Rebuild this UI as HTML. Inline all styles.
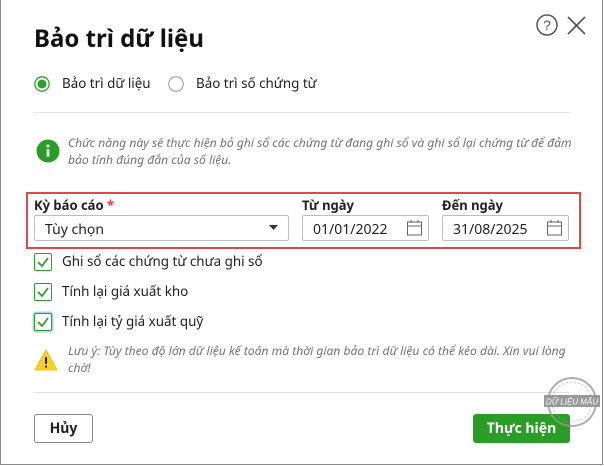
<!DOCTYPE html>
<html><head><meta charset="utf-8"><style>
*{margin:0;padding:0;box-sizing:border-box}
body{width:604px;height:466px;background:#fff;font-family:"Noto Sans","Liberation Sans","DejaVu Sans",sans-serif;color:#212121;position:relative;overflow:hidden}
.a{position:absolute;white-space:nowrap}
.frame{position:absolute;left:0;top:-2px;width:603px;height:467px;border:1px solid #8a8a8a}
.t{font-size:13.4px}
.lbl{font-size:13px;font-weight:bold}
.inp{position:absolute;border:1px solid #bdbdbd;border-radius:2px;height:26px;font-size:14px;padding:4px 0 0 10px}
.cb{position:absolute;left:34px;width:18px;height:18px;border:1.5px solid #2ca02c;border-radius:2px}
.it{font-style:italic;font-size:12.1px;color:#757575;line-height:16.5px}
</style></head><body>
<div class="frame"></div>
<div class="a" style="left:34px;top:22px;font-size:24px;font-weight:bold;color:#111">Bảo trì dữ liệu</div>
<svg class="a" style="left:535px;top:13px" width="56" height="26"><circle cx="12" cy="12" r="10" fill="none" stroke="#555" stroke-width="1.5"/><text x="12" y="17" text-anchor="middle" font-size="14" fill="#555" font-family="Liberation Sans">?</text><path d="M33 4 L50 21 M50 4 L33 21" stroke="#555" stroke-width="1.6"/></svg>
<svg class="a" style="left:34px;top:76px" width="16" height="16"><circle cx="8" cy="8" r="7.2" fill="none" stroke="#2ca02c" stroke-width="1.3"/><circle cx="8" cy="8" r="4.5" fill="#2ca02c"/></svg>
<div class="a t" style="left:62px;top:74px">Bảo trì dữ liệu</div>
<svg class="a" style="left:168px;top:76px" width="16" height="16"><circle cx="8" cy="8" r="7.2" fill="none" stroke="#999" stroke-width="1"/></svg>
<div class="a t" style="left:196px;top:74px">Bảo trì số chứng từ</div>
<div class="a" style="left:34px;top:112px;width:536px;height:1px;background:#e3e3e3"></div>
<svg class="a" style="left:36px;top:139px" width="24" height="24"><circle cx="12" cy="12" r="11.5" fill="#2a9d26"/><rect x="10.7" y="10" width="2.6" height="8" fill="#fff"/><circle cx="12" cy="7" r="1.5" fill="#fff"/></svg>
<div class="a it" style="left:68px;top:135px">Chức năng này sẽ thực hiện bỏ ghi sổ các chứng từ đang ghi sổ và ghi sổ lại chứng từ để đảm<br>bảo tính đúng đắn của số liệu.</div>
<div class="a" style="left:26px;top:192px;width:555px;height:57px;border:2px solid #e04848"></div>
<div class="a lbl" style="left:34px;top:196px">Kỳ báo cáo <span style="color:#e53935">*</span></div>
<div class="a lbl" style="left:302px;top:196px">Từ ngày</div>
<div class="a lbl" style="left:442px;top:196px">Đến ngày</div>
<div class="inp" style="left:34px;top:215px;width:255px">Tùy chọn</div>
<svg class="a" style="left:269px;top:224px" width="10" height="8"><path d="M0 1 H9 L4.5 6Z" fill="#333"/></svg>
<div class="inp" style="left:302px;top:215px;width:127px">01/01/2022</div>
<div class="inp" style="left:442px;top:215px;width:127px">31/08/2025</div>
<svg class="a" style="left:406px;top:219px" width="18" height="18"><rect x="1.5" y="3" width="14" height="13" fill="none" stroke="#666"/><path d="M1.5 7 H15.5 M5 1 V4 M12 1 V4" stroke="#666"/></svg>
<svg class="a" style="left:546px;top:219px" width="18" height="18"><rect x="1.5" y="3" width="14" height="13" fill="none" stroke="#666"/><path d="M1.5 7 H15.5 M5 1 V4 M12 1 V4" stroke="#666"/></svg>
<div class="cb" style="top:253px"></div><div class="cb" style="top:283px"></div><div class="cb" style="top:313px;box-shadow:0 0 0 1.5px #9ed8f5"></div>
<svg class="a" style="left:34px;top:253px" width="18" height="80"><g fill="none" stroke="#2ca02c" stroke-width="1.8"><path d="M4 9 L8 13 L14 5"/><path d="M4 39 L8 43 L14 35"/><path d="M4 69 L8 73 L14 65"/></g></svg>
<div class="a t" style="left:62px;top:252px">Ghi sổ các chứng từ chưa ghi sổ</div>
<div class="a t" style="left:62px;top:282px">Tính lại giá xuất kho</div>
<div class="a t" style="left:62px;top:312px">Tính lại tỷ giá xuất quỹ</div>
<svg class="a" style="left:34px;top:348px" width="24" height="24"><path d="M12 2 L23 22 H1Z" fill="#f8d020" stroke="#f0c010" stroke-linejoin="round"/><rect x="11" y="9" width="2" height="7" fill="#222"/><rect x="11" y="17.5" width="2" height="2" fill="#222"/></svg>
<div class="a it" style="left:68px;top:343px">Lưu ý: Tùy theo độ lớn dữ liệu kế toán mà thời gian bảo trì dữ liệu có thể kéo dài. Xin vui lòng<br>chờ!</div>
<div class="a" style="left:34px;top:392px;width:536px;height:1px;background:#e0e0e0"></div>
<div class="a" style="left:34px;top:414px;width:59px;height:29px;border:1px solid #888;border-radius:3px;font-size:14px;font-weight:bold;text-align:center;line-height:27px">Hủy</div>
<div class="a" style="left:473px;top:414px;width:97px;height:29px;background:#2a9d26;border-radius:3px;color:#fff;font-size:14px;font-weight:bold;text-align:center;line-height:29px">Thực hiện</div>
<svg class="a" style="left:544px;top:375px" width="56" height="56"><circle cx="28" cy="27" r="24" fill="none" stroke="#999" stroke-width="2" opacity=".8"/><circle cx="28" cy="27" r="20" fill="none" stroke="#aaa" stroke-width="1" stroke-dasharray="2 2" opacity=".7"/><rect x="0" y="20" width="56" height="12" fill="#999"/><text x="28" y="29.5" text-anchor="middle" font-size="8" font-style="italic" fill="#fff" font-family="Liberation Sans">DỮ LIỆU MẪU</text></svg>
</body></html>
